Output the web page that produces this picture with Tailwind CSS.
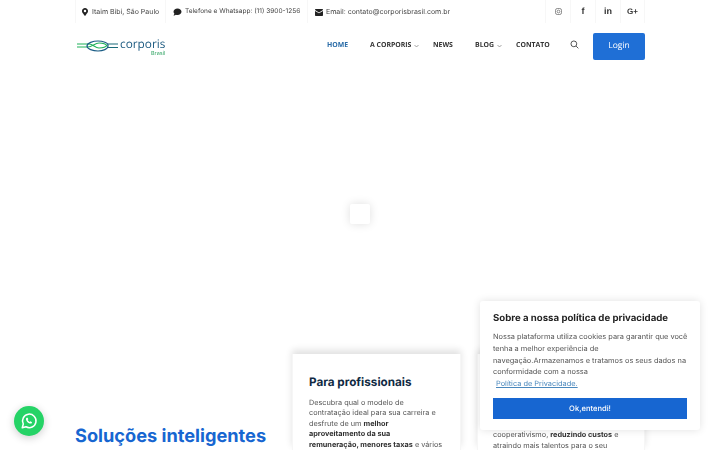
<!DOCTYPE html>
<html lang="en">
  <head>
    <meta charset="UTF-8" />
    <meta name="viewport" content="width=device-width, initial-scale=1.0" />
    <title>Corporis Brasil</title>
    <script src="https://cdn.jsdelivr.net/npm/@tailwindcss/browser@4"></script>
  </head>
  <body class="bg-white h-[450px] overflow-hidden font-['Inter',sans-serif] [text-rendering:geometricPrecision] antialiased">
    <!-- top bar -->
    <div class="will-change-transform w-[570px] ml-[75px] h-[23px] flex items-stretch justify-between text-[7px] text-[#444]">
      <div class="flex items-stretch">
        <div class="flex items-center gap-[4px] pl-[6px] pr-[6px] pt-[1px] border-l border-[#f7f7f7]">
          <svg width="6" height="8" viewBox="0 0 384 512" fill="#222"><path d="M172 502C27 291 0 269 0 192 0 86 86 0 192 0s192 86 192 192c0 77-27 99-172 310-10 14-30 14-40 0zm20-230a80 80 0 1 0 0-160 80 80 0 0 0 0 160z"/></svg>
          <span class="w-[67px] whitespace-nowrap">Itaim Bibi, São Paulo</span>
        </div>
        <div class="flex items-center gap-[3px] pl-[7px] pr-[6px] pt-[1px] border-l border-[#f7f7f7]">
          <svg width="9" height="8" viewBox="0 0 512 512" fill="#222"><path d="M256 32C115 32 0 125 0 240c0 50 22 95 58 131-13 51-55 96-55 97-3 3-3 7-1 10s5 2 8 2c66 0 116-32 140-51 33 12 69 19 106 19 141 0 256-93 256-208S397 32 256 32z"/></svg>
          <span class="w-[116px] whitespace-nowrap text-[6.550px]">Telefone e Whatsapp: (11) 3900-1256</span>
        </div>
        <div class="flex items-center gap-[3px] pl-[7px] pt-[1px] border-l border-[#f7f7f7]">
          <svg width="8" height="7" viewBox="0 0 16 14" fill="#222"><path d="M0 1.500A1.500 1.500 0 0 1 1.500 0h13A1.500 1.500 0 0 1 16 1.500v.6L8 7 0 2.100z"/><path d="M0 3.800V12.500A1.500 1.500 0 0 0 1.500 14h13a1.500 1.500 0 0 0 1.500-1.500V3.800L8 8.700z"/></svg>
          <span class="whitespace-nowrap">Email: contato@corporisbrasil.com.br</span>
        </div>
      </div>
      <div class="flex items-stretch text-[#333]">
        <div class="w-[25px] flex items-center justify-center border-l border-[#f7f7f7]">
          <svg width="7" height="7" viewBox="0 0 14 14" fill="none" stroke="#555" stroke-width="1.300"><rect x="1" y="1" width="12" height="12" rx="3.500"/><circle cx="7" cy="7" r="2.800"/></svg>
        </div>
        <div class="w-[25px] flex items-center justify-center border-l border-[#f7f7f7] font-['Liberation_Sans',sans-serif] text-[9px] font-bold">f</div>
        <div class="w-[25px] flex items-center justify-center border-l border-[#f7f7f7] font-['Liberation_Sans',sans-serif] text-[9px] font-bold">in</div>
        <div class="w-[25px] flex items-center justify-center border-x border-[#f7f7f7] font-['Liberation_Sans',sans-serif] text-[8px] font-bold">G+</div>
      </div>
    </div>

    <!-- nav -->
    <div class="will-change-transform w-[570px] ml-[75px] h-[46px] flex items-center justify-between">
      <div class="flex items-center">
        <svg width="41" height="12" viewBox="0 0 41 12" fill="none" class="ml-[2px]">
          <path d="M0 4h12c4 0 6 4 10 4 3 0 7-1 8-3" stroke="#1fb25a" stroke-width="1.100"/>
          <path d="M0 7h11c4 0 7-4 11-4 3 0 7 1 8 3" stroke="#1fb25a" stroke-width="1.100"/>
          <path d="M31 5c0-2-5-4-10-4S10 3 10 6s6 5 11 5 10-2 10-5z" stroke="#1a5c85" stroke-width="1.200"/>
          <path d="M31 4h10M31 7.500h10" stroke="#1a6a7a" stroke-width="1.100"/>
        </svg>
        <div class="ml-[2px] flex flex-col items-end leading-none">
          <span class="text-[11.800px] text-[#1c5a80] font-['Open_Sans',sans-serif] leading-[12px] mt-[2px]">corporis</span>
          <span class="text-[5.500px] text-[#3aa86a] leading-[5px] mt-[2px]">Brasil</span>
        </div>
      </div>
      <div class="flex items-center font-['Open_Sans',sans-serif] font-bold text-[6.900px] text-[#333]">
        <span class="text-[#2a6ca8] w-[43px] shrink-0">HOME</span>
        <span class="w-[63px] shrink-0 flex items-center gap-[3px]">A CORPORIS
          <svg width="5" height="4" viewBox="0 0 10 8" fill="none" stroke="#666" stroke-width="1.200"><path d="M1 2l4 4 4-4"/></svg>
        </span>
        <span class="w-[42px] shrink-0">NEWS</span>
        <span class="w-[41px] shrink-0 flex items-center gap-[3px]">BLOG
          <svg width="5" height="4" viewBox="0 0 10 8" fill="none" stroke="#666" stroke-width="1.200"><path d="M1 2l4 4 4-4"/></svg>
        </span>
        <span class="w-[54px] shrink-0">CONTATO</span>
        <svg width="9" height="9" viewBox="0 0 14 14" fill="none" stroke="#444" stroke-width="1.400" class="mr-[14px] mb-[4px] shrink-0"><circle cx="6" cy="6" r="4.500"/><path d="M9.500 9.500L13 13"/></svg>
        <div class="w-[52px] h-[27px] mt-[1px] shrink-0 bg-[#1f6fd6] rounded-[2px] text-white flex items-center justify-center text-[8.500px] font-medium">Login</div>
      </div>
    </div>

    <!-- blank hero with the loader -->
    <div class="relative h-[285px]">
      <div class="absolute left-[350px] top-[135px] w-[20px] h-[20px] bg-white rounded-[2px] shadow-[0_0_10px_rgba(0,0,0,0.13)]"></div>
    </div>

    <!-- solutions -->
    <div class="w-[570px] ml-[75px] flex items-start gap-[16px]">
      <div class="w-[201px] pt-[70px]">
        <h2 class="text-[#1766d1] text-[18.200px] font-bold whitespace-nowrap leading-6">Soluções inteligentes</h2>
      </div>
      <div class="w-[169px] h-[96px] bg-white px-[16px] pt-[20px] shadow-[0_-4px_7px_rgba(0,0,0,0.12)] border-x border-[#f6f6f6] text-[7.300px] leading-[10.400px] text-[#555]">
        <h3 class="text-[#102a43] text-[11.700px] font-bold leading-4 mb-[8px] whitespace-nowrap">Para profissionais</h3>
        <p class="whitespace-nowrap will-change-transform">Descubra qual o modelo de<br />contratação ideal para sua carreira e<br />desfrute de um <b class="text-[#333]">melhor<br />aproveitamento da sua<br />remuneração, menores taxas</b> e vários</p>
      </div>
      <div class="w-[168px] h-[96px] bg-white px-[15px] pt-[75px] shadow-[0_-4px_7px_rgba(0,0,0,0.12)] border-x border-[#f6f6f6] text-[7.300px] leading-[11px] text-[#555]">
        <p class="whitespace-nowrap will-change-transform">cooperativismo, <b class="text-[#333]">reduzindo custos</b> e<br />atraindo mais talentos para o seu</p>
      </div>
    </div>

    <!-- cookie notice -->
    <div class="fixed left-[480px] top-[301px] w-[220px] h-[129px] bg-white rounded-[3px] shadow-[0_0_8px_rgba(0,0,0,0.12)] px-[13px] pt-[11px]">
      <h4 class="text-[#222] text-[9.650px] font-bold leading-[12px] mt-[1px] mb-[6px] whitespace-nowrap">Sobre a nossa política de privacidade</h4>
      <p class="text-[7.400px] leading-[11.750px] text-[#555] whitespace-nowrap will-change-transform">Nossa plataforma utiliza cookies para garantir que você<br />tenha a melhor experiência de<br />navegação.Armazenamos e tratamos os seus dados na<br />conformidade com a nossa</p>
      <a class="block ml-[3px] text-[7.400px] leading-[11.750px] text-[#4a88bd] underline">Política de Privacidade.</a>
      <div class="mt-[8px] h-[21px] bg-[#1766d1] text-white text-[7.600px] font-medium flex items-center justify-center">Ok,entendi!</div>
    </div>

    <!-- whatsapp -->
    <div class="fixed left-[14px] top-[406px] w-[30px] h-[30px] rounded-full bg-[#25d366] shadow-[0_2px_8px_rgba(0,0,0,0.2)] flex items-center justify-center">
      <svg width="18" height="18" viewBox="0 0 24 24" fill="none">
        <path d="M3 21l1.400-5A9 9 0 1 1 8 19.700z" stroke="#fff" stroke-width="2" stroke-linejoin="round"/>
        <path d="M9 7.500c-1 .5-1.300 1.700-.8 3 .8 2.200 2.600 4 4.800 4.800 1.300.5 2.500 0 3-1l-.3-1-2-1-1 1c-1-.4-2.100-1.500-2.500-2.500l.9-1-.9-2.100z" fill="#fff"/>
      </svg>
    </div>
  </body>
</html>
